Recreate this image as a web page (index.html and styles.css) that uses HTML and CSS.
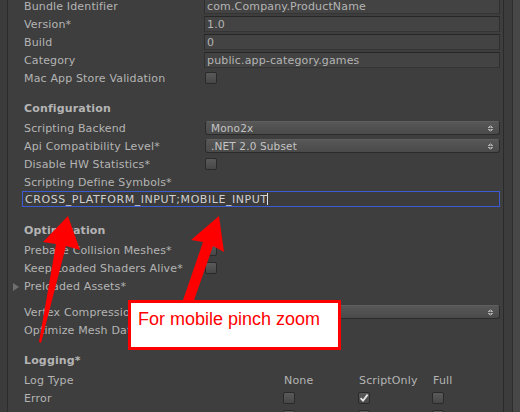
FILE: index.html
```html
<!DOCTYPE html>
<html>
<head>
<meta charset="utf-8">
<link rel="stylesheet" href="styles.css">
</head>
<body>
<div class="frame">
  <div class="gutter"></div>
  <div class="inspector">
    <div class="row"><span class="label">Bundle Identifier</span><div class="field">com.Company.ProductName</div></div>
    <div class="row"><span class="label">Version*</span><div class="field">1.0</div></div>
    <div class="row"><span class="label">Build</span><div class="field">0</div></div>
    <div class="row"><span class="label">Category</span><div class="field">public.app-category.games</div></div>
    <div class="row"><span class="label">Mac App Store Validation</span><div><span class="check"></span></div></div>

    <div class="header">Configuration</div>
    <div class="row"><span class="label">Scripting Backend</span><div class="popup">Mono2x<span class="updown"></span></div></div>
    <div class="row"><span class="label">Api Compatibility Level*</span><div class="popup">.NET 2.0 Subset<span class="updown"></span></div></div>
    <div class="row"><span class="label">Disable HW Statistics*</span><div><span class="check"></span></div></div>
    <div class="row"><span class="label">Scripting Define Symbols*</span></div>
    <div class="row-full"><div class="define">CROSS_PLATFORM_INPUT;MOBILE_INPUT<span class="caret"></span></div></div>

    <div class="header">Optimization</div>
    <div class="row"><span class="label">Prebake Collision Meshes*</span><div><span class="check"></span></div></div>
    <div class="row"><span class="label">Keep Loaded Shaders Alive*</span><div><span class="check"></span></div></div>
    <div class="row"><span class="label foldout"><span class="tri"></span>Preloaded Assets*</span></div>
    <div class="gap"></div>
    <div class="row"><span class="label">Vertex Compression*</span><div class="popup"><span class="updown"></span></div></div>
    <div class="row"><span class="label">Optimize Mesh Data*</span><div><span class="check"></span></div></div>

    <div class="header">Logging*</div>
    <div class="row"><span class="label">Log Type</span><div class="logcols"><span class="colhead">None</span><span class="colhead">ScriptOnly</span><span class="colhead">Full</span></div></div>
    <div class="row"><span class="label">Error</span><div class="logcols"><span class="check plain"></span><span class="check plain checked"><svg viewBox="0 0 12 12" width="12" height="12"><path d="M2.6 6.2 L5 8.7 L9.6 2.6" fill="none" stroke="#e8e8e8" stroke-width="1.8"/></svg></span><span class="check plain"></span></div></div>
    <div class="row"><span class="label">Assert</span><div class="logcols"><span class="check plain"></span><span class="check plain checked"><svg viewBox="0 0 12 12" width="12" height="12"><path d="M2.6 6.2 L5 8.7 L9.6 2.6" fill="none" stroke="#e8e8e8" stroke-width="1.8"/></svg></span><span class="check plain"></span></div></div>
  </div>
  <div class="scroll"></div>
</div>

<svg class="arrows" width="520" height="412" viewBox="0 0 520 412">
  <polygon fill="#ff0000" points="68,216 80,250 66,246 41,343 39,342 56,244 43,242"/>
  <polygon fill="#ff0000" points="219,216 224,252 213,246 192,306 181,306 203,242 191,240"/>
</svg>
<div class="callout">For mobile pinch zoom</div>
</body>
</html>
```
FILE: styles.css
```css
body {
  margin: 0;
  width: 520px;
  height: 412px;
  overflow: hidden;
  position: relative;
  background: #3e3e3e;
  font-family: "DejaVu Sans", sans-serif;
  font-size: 11px;
  letter-spacing: 0.15px;
  color: #b4b4b4;
}

.frame {
  display: flex;
  height: 412px;
}

.gutter {
  width: 8px;
  background: linear-gradient(to right, #3b3b3b 0 7px, #2c2c2c 7px 8px);
}

.inspector {
  flex: 1;
  padding: 0 3px 0 16px;
  margin-top: -4px;
}

.scroll {
  width: 17px;
  background: linear-gradient(to right, #2a2a2a 0 1px, #3c3c3c 1px 9px, #2e2e2e 9px 10px, #474747 10px 17px);
}

.row {
  display: grid;
  grid-template-columns: 180px 1fr;
  height: 18px;
  align-items: center;
}

.label {
  line-height: 18px;
  padding-top: 2px;
  white-space: nowrap;
}

.field {
  height: 16px;
  box-sizing: border-box;
  border: 1px solid #2f2f2f;
  border-top-color: #262626;
  border-bottom-color: #353535;
  background: #434343;
  padding-left: 2px;
  line-height: 15px;
  white-space: nowrap;
  overflow: hidden;
}

.popup {
  position: relative;
  height: 14px;
  box-sizing: border-box;
  margin-left: 1px;
  border-radius: 3px;
  border: 1px solid #2b2b2b;
  border-top-color: #5e5e5e;
  background: linear-gradient(#575757, #4a4a4a);
  padding-left: 5px;
  line-height: 13px;
  color: #c4c4c4;
  font-size: 10.5px;
}

.updown {
  position: absolute;
  right: 6px;
  top: 3px;
  width: 5px;
  height: 7px;
  background:
    linear-gradient(to bottom right, transparent 50%, #b0b0b0 50%) 0 0 / 2.5px 3px no-repeat,
    linear-gradient(to bottom left, transparent 50%, #b0b0b0 50%) 2.5px 0 / 2.5px 3px no-repeat,
    linear-gradient(to top right, transparent 50%, #b0b0b0 50%) 0 4px / 2.5px 3px no-repeat,
    linear-gradient(to top left, transparent 50%, #b0b0b0 50%) 2.5px 4px / 2.5px 3px no-repeat;
}

.check {
  display: block;
  width: 12px;
  height: 12px;
  box-sizing: border-box;
  margin-left: 1px;
  border-radius: 2px;
  border: 1px solid #2a2a2a;
  background: linear-gradient(#5a5a5a, #474747);
  position: relative;
}

.check.plain {
  margin-left: 0;
}

.check svg {
  position: absolute;
  left: -1px;
  top: -1px;
}

.header {
  margin-top: 12px;
  padding-top: 2px;
  font-weight: bold;
  line-height: 18px;
}

.row-full {
  height: 18px;
  display: flex;
  align-items: center;
}

.define {
  flex: 1;
  height: 16px;
  box-sizing: border-box;
  margin-left: -2px;
  border: 1px solid #3a5bd3;
  background: #3c3c3c;
  padding-left: 2px;
  line-height: 15px;
  letter-spacing: 0.55px;
  color: #d0d0d0;
  white-space: nowrap;
}

.caret {
  display: inline-block;
  width: 1px;
  height: 12px;
  margin-left: -0.5px;
  background: #e0e0e0;
  vertical-align: -2px;
}

.foldout {
  display: flex;
  align-items: center;
  margin-left: -11px;
}

.tri {
  width: 0;
  height: 0;
  border-left: 6px solid #6f6f6f;
  border-top: 4px solid transparent;
  border-bottom: 4px solid transparent;
  margin-right: 5px;
}

.gap {
  height: 8px;
}

.logcols {
  display: grid;
  grid-template-columns: 75px 74px auto;
  padding-left: 79px;
  align-items: center;
}

.colhead {
  padding-left: 1px;
  padding-top: 2px;
  line-height: 18px;
}

.arrows {
  position: absolute;
  left: 0;
  top: 0;
}

.callout {
  position: absolute;
  left: 128px;
  top: 300px;
  width: 213px;
  height: 50px;
  box-sizing: border-box;
  border: 3px solid #ff0000;
  background: #ffffff;
  padding: 6px 0 0 7px;
  font-family: "Liberation Sans", Arial, sans-serif;
  font-size: 18px;
  letter-spacing: 0;
  line-height: 20px;
  color: #ff0000;
  white-space: nowrap;
}
```
